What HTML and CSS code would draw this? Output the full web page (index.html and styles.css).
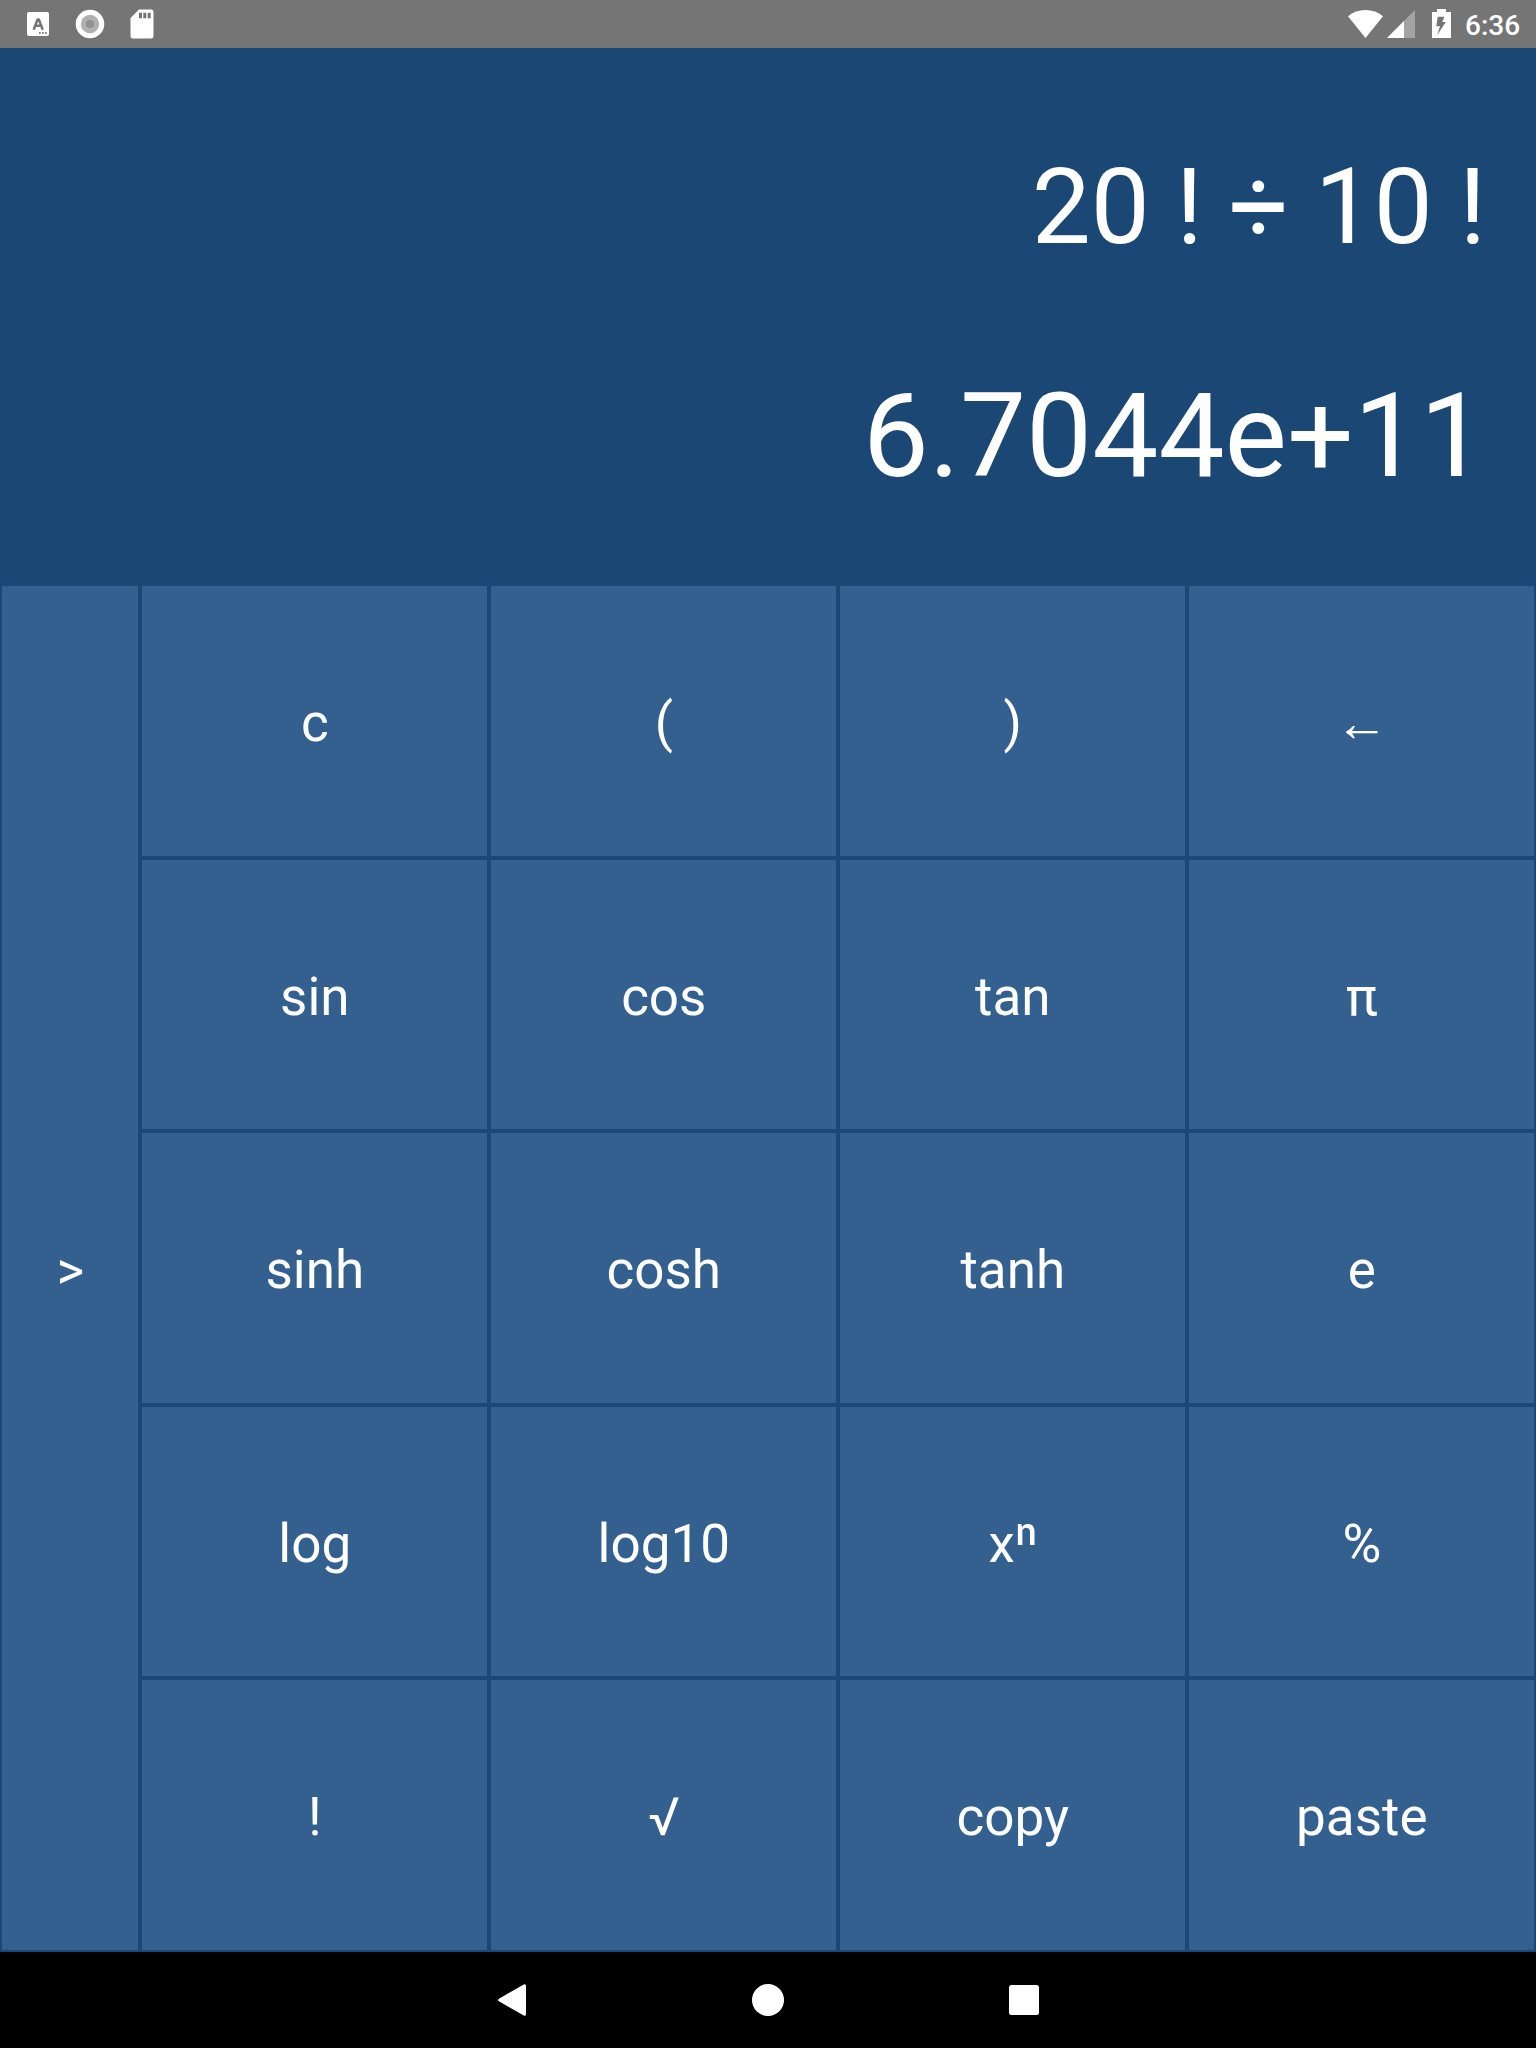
FILE: index.html
```html
<!DOCTYPE html>
<html lang="en">
<head>
<meta charset="utf-8">
<title>Calculator</title>
<link rel="stylesheet" href="styles.css">
</head>
<body>
<div class="screen">
  <header class="status">
    <div class="status-left">
      <svg class="ic-a" width="22" height="24" viewBox="0 0 22 24"><rect width="22" height="24" rx="2" fill="#fff"/><path d="M7 16.800 10.600 7.400h1.200L15.400 16.800M8.500 13.800h5.400" fill="none" stroke="#757575" stroke-width="2.500" stroke-linecap="round" stroke-linejoin="round"/><path d="M12 20h1.700v1.800H12zM15 20h1.700v1.800H15zM18 20h1.700v1.800H18z" fill="#757575"/></svg>
      <svg class="ic-disc" width="30" height="30" viewBox="0 0 30 30"><circle cx="15" cy="15" r="14.300" fill="#fff"/><circle cx="15" cy="15" r="9.200" fill="#b0b0b0"/><circle cx="15" cy="15" r="4.300" fill="#929292"/></svg>
      <svg class="ic-sd" width="24" height="30" viewBox="0 0 24 30"><path d="M9 .5h12a2.500 2.500 0 0 1 2.500 2.500v24a2.500 2.500 0 0 1-2.500 2.500H3A2.500 2.500 0 0 1 .5 27V9z" fill="#fff"/><path d="M9 3.700h3v5.600H9zM13.300 3.700h3v5.600h-3zM17.700 3.700h3v5.600h-3z" fill="#757575"/></svg>
    </div>
    <div class="status-right">
      <svg class="ic-wifi" width="35" height="28" viewBox="0 0 35 28"><path d="M17.500 28 0 6.200C5 2 11 0 17.500 0S30 2 35 6.200z" fill="#fff"/></svg>
      <svg class="ic-cell" width="28" height="28" viewBox="0 0 28 28"><path d="M28 0v28H0z" fill="#a3a3a3"/><path d="M17 11v17H0z" fill="#fff"/></svg>
      <svg class="ic-batt" width="20" height="29" viewBox="0 0 20 29"><path d="M5 0h9v3h5v26H0V3h5z" fill="#fff"/><path d="M5.700 7.700h6.800L10.200 13h3.600L5 26.300l3-9H4.300z" fill="#757575"/></svg>
      <span class="clock">6:36</span>
    </div>
  </header>
  <main class="display">
    <div class="expression">20 ! ÷ 10 !</div>
    <div class="result">6.7044e+11</div>
  </main>
  <section class="keypad">
    <button class="key side">&gt;</button>
    <button class="key">c</button><button class="key">(</button><button class="key">)</button><button class="key arrow">←</button>
    <button class="key">sin</button><button class="key">cos</button><button class="key">tan</button><button class="key">π</button>
    <button class="key">sinh</button><button class="key">cosh</button><button class="key">tanh</button><button class="key">e</button>
    <button class="key">log</button><button class="key">log10</button><button class="key">xⁿ</button><button class="key">%</button>
    <button class="key">!</button><button class="key">√</button><button class="key">copy</button><button class="key">paste</button>
  </section>
  <nav class="navbar">
    <svg width="32" height="32" viewBox="0 0 32 32"><path d="M28.500 1.700v28.600L3.700 16z" fill="#fff" stroke="#fff" stroke-width="3" stroke-linejoin="round"/></svg>
    <svg width="32" height="32" viewBox="0 0 32 32"><circle cx="16" cy="16" r="16" fill="#fff"/></svg>
    <svg width="32" height="32" viewBox="0 0 32 32"><rect x="1" y="1" width="30" height="30" rx="2.500" fill="#fff"/></svg>
  </nav>
</div>
</body>
</html>
```
FILE: styles.css
```css
* { box-sizing: border-box; }
body { margin: 0; font-family: Roboto, "Noto Sans", sans-serif; color: #fff; }
.screen {
  width: 1536px;
  height: 2048px;
  display: grid;
  grid-template-rows: 48px 536px 1368px 96px;
  background: #1b4774;
}
svg { display: block; flex: none; }
.status {
  display: flex;
  justify-content: space-between;
  background: #757575;
}
.status-left { display: flex; align-items: flex-start; padding: 9px 0 0 27px; }
.ic-a { margin-top: 3px; }
.ic-disc { margin-left: 26px; }
.ic-sd { margin-left: 25px; }
.status-right { display: flex; align-items: flex-start; padding: 9px 16px 0 0; }
.ic-wifi, .ic-cell { margin-top: 1px; }
.ic-cell { margin-left: 4px; }
.ic-batt { margin-left: 17px; }
.clock {
  width: 55px;
  margin: 1px 0 0 13px;
  font-size: 28px;
  font-weight: 500;
  line-height: 32px;
  white-space: nowrap;
}
.display {
  display: flex;
  flex-direction: column;
  align-items: flex-end;
  white-space: pre;
}
.expression { margin-top: 98px; padding-right: 50px; font-size: 105px; line-height: 124px; }
.result { margin-top: 97px; padding-right: 50px; font-size: 117.7px; line-height: 138px; }
.keypad {
  display: grid;
  grid-template-columns: 140px repeat(4, 349px);
  grid-template-rows: repeat(5, 1fr);
}
.key {
  display: flex;
  align-items: center;
  justify-content: center;
  margin: 2px;
  padding: 5px 0 0 0.6px;
  border: 0;
  background: #346090;
  color: inherit;
  font: 400 53px/62px Roboto, "Noto Sans", sans-serif;
}
.key:nth-last-child(-n+4) { padding-top: 3.5px; }
.side { grid-row: 1 / 6; }
.arrow { font-family: "Liberation Serif", serif; }
.navbar {
  display: flex;
  align-items: center;
  justify-content: center;
  gap: 224px;
  background: #000;
}
```
